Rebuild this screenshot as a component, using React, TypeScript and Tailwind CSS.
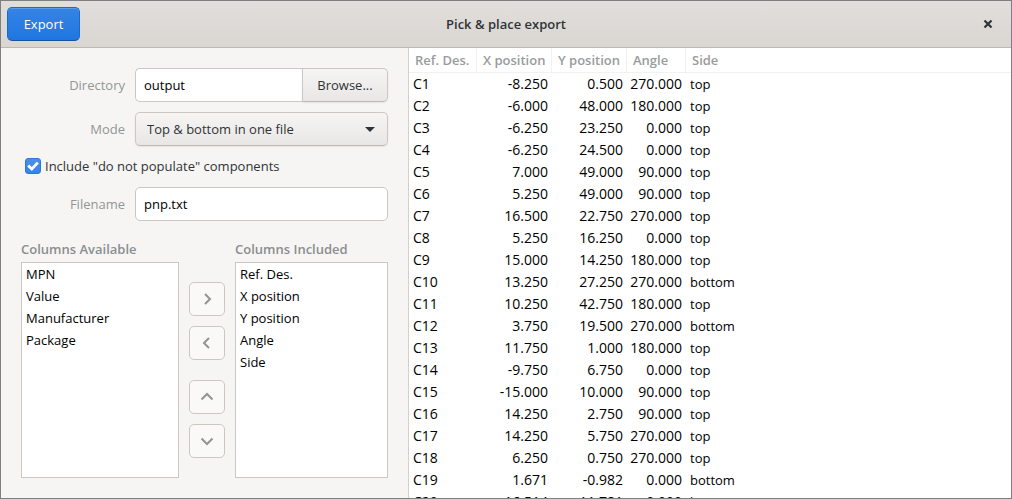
import type { ReactNode } from "react";

type Row = [string, string, string, string, string];

const ROWS: Row[] = [
  ["C1", "-8.250", "0.500", "270.000", "top"],
  ["C2", "-6.000", "48.000", "180.000", "top"],
  ["C3", "-6.250", "23.250", "0.000", "top"],
  ["C4", "-6.250", "24.500", "0.000", "top"],
  ["C5", "7.000", "49.000", "90.000", "top"],
  ["C6", "5.250", "49.000", "90.000", "top"],
  ["C7", "16.500", "22.750", "270.000", "top"],
  ["C8", "5.250", "16.250", "0.000", "top"],
  ["C9", "15.000", "14.250", "180.000", "top"],
  ["C10", "13.250", "27.250", "270.000", "bottom"],
  ["C11", "10.250", "42.750", "180.000", "top"],
  ["C12", "3.750", "19.500", "270.000", "bottom"],
  ["C13", "11.750", "1.000", "180.000", "top"],
  ["C14", "-9.750", "6.750", "0.000", "top"],
  ["C15", "-15.000", "10.000", "90.000", "top"],
  ["C16", "14.250", "2.750", "90.000", "top"],
  ["C17", "14.250", "5.750", "270.000", "top"],
  ["C18", "6.250", "0.750", "270.000", "top"],
  ["C19", "1.671", "-0.982", "0.000", "bottom"],
  ["C20", "16.514", "11.781", "0.000", "bottom"],
];

const AVAILABLE = ["MPN", "Value", "Manufacturer", "Package"];
const INCLUDED = ["Ref. Des.", "X position", "Y position", "Angle", "Side"];

function ColumnList({ title, items }: { title: string; items: string[] }) {
  return (
    <section className="flex min-w-0 flex-col" aria-label={title}>
      <h2 className="h-[21px] font-semibold leading-4 whitespace-nowrap text-[#8b8e8f]">{title}</h2>
      <ul className="grow border border-[#cdc7c2] bg-white text-black">
        {items.map((item) => (
          <li key={item} className="px-1 leading-[22px]">
            {item}
          </li>
        ))}
      </ul>
    </section>
  );
}

function MoveButton({ label, children }: { label: string; children: ReactNode }) {
  return (
    <button
      type="button"
      aria-label={label}
      className="flex h-[34px] w-9 items-center justify-center rounded-[5px] border border-[#cdc7c2] bg-[#faf9f8]"
    >
      <svg width="16" height="16" viewBox="0 0 16 16" fill="none" stroke="#929595" strokeWidth="2" aria-hidden="true">
        {children}
      </svg>
    </button>
  );
}

export default function App() {
  return (
    <div className="flex h-screen flex-col overflow-hidden border border-[#7f7f7f] bg-[#f6f5f4] font-['Open_Sans','Noto_Sans',sans-serif] text-[13px] text-[#2e3436]">
      <header className="grid h-[47px] shrink-0 grid-cols-[1fr_auto_1fr] items-center border-b border-[#bfb8b1] bg-linear-to-b from-[#e1dedb] to-[#dad6d2] px-1.5">
        <button
          type="button"
          className="h-[34px] w-[73px] justify-self-start rounded-[5px] border border-[#1b6acb] border-b-[#15539e] bg-linear-to-b from-[#3584e4] to-[#1f76e1] pt-0.5 text-white shadow-[inset_0_1px_rgba(255,255,255,0.2)]"
        >
          Export
        </button>
        <h1 className="pt-0.5 font-semibold">Pick &amp; place export</h1>
        <button type="button" aria-label="Close" className="flex h-[34px] w-[34px] items-center justify-center justify-self-end">
          <svg width="16" height="16" viewBox="0 0 16 16" stroke="#2e3436" strokeWidth="2.2" aria-hidden="true">
            <path d="M4.500 4.500l7 7M11.500 4.500l-7 7" />
          </svg>
        </button>
      </header>

      <main className="flex min-h-0 grow">
        <form className="flex w-[408px] shrink-0 flex-col border-r border-[#d5d0cc] p-5 pr-5" onSubmit={(e) => e.preventDefault()}>
          <div className="grid grid-cols-[104px_minmax(0,1fr)] items-center gap-2.5">
            <label htmlFor="directory" className="pt-0.5 text-right text-[#929595]">
              Directory
            </label>
            <div className="flex">
              <input
                id="directory"
                defaultValue="output"
                className="h-[34px] min-w-0 grow rounded-l-[5px] border border-r-0 border-[#cdc7c2] bg-white px-2 text-black outline-none"
              />
              <button
                type="button"
                className="h-[34px] w-[86px] shrink-0 rounded-r-[5px] border border-[#cdc7c2] border-b-[#bfb8b1] bg-linear-to-b from-[#f6f5f4] to-[#e8e7e5] pt-0.5 shadow-[0_1px_2px_rgba(0,0,0,0.07)]"
              >
                Browse...
              </button>
            </div>

            <label htmlFor="mode" className="pt-0.5 text-right text-[#929595]">
              Mode
            </label>
            <div className="relative">
              <select
                id="mode"
                className="h-[34px] w-full appearance-none rounded-[5px] border border-[#cdc7c2] border-b-[#bfb8b1] bg-linear-to-b from-[#f6f5f4] to-[#e8e7e5] pt-0.5 pr-8 pl-[11px] shadow-[0_1px_2px_rgba(0,0,0,0.07)]"
              >
                <option>Top &amp; bottom in one file</option>
                <option>Top &amp; bottom separately</option>
              </select>
              <svg className="pointer-events-none absolute top-[9px] right-[10px]" width="16" height="16" viewBox="0 0 16 16" fill="#2e3436" aria-hidden="true">
                <path d="M3 6h10l-5 5z" />
              </svg>
            </div>

            <label className="col-span-2 mb-px flex h-5 items-center gap-1 pl-1">
              <input type="checkbox" defaultChecked className="peer sr-only" />
              <svg
                className="shrink-0 rounded-[3px] border border-[#2b78da] bg-linear-to-b from-[#4a90e8] to-[#3584e4]"
                width="16"
                height="16"
                viewBox="1 1 14 14"
                fill="none"
                stroke="#fff"
                strokeWidth="2.8"
                aria-hidden="true"
              >
                <path d="M3.200 7.400l3.600 3.600 6-6.400" />
              </svg>
              <span className="pt-0.5">Include "do not populate" components</span>
            </label>

            <label htmlFor="filename" className="pt-0.5 text-right text-[#929595]">
              Filename
            </label>
            <input
              id="filename"
              defaultValue="pnp.txt"
              className="h-[34px] min-w-0 rounded-[5px] border border-[#cdc7c2] bg-white px-2 text-black outline-none"
            />
          </div>

          <div className="mt-5 grid grow grid-cols-[158px_36px_minmax(0,1fr)] gap-2.5">
            <ColumnList title="Columns Available" items={AVAILABLE} />
            <div className="flex flex-col justify-center gap-5 pt-[21px]">
              <div className="flex flex-col gap-2.5">
                <MoveButton label="Include column">
                  <path d="M6 3l5 5-5 5" />
                </MoveButton>
                <MoveButton label="Remove column">
                  <path d="M10 3L5 8l5 5" />
                </MoveButton>
              </div>
              <div className="flex flex-col gap-2.5">
                <MoveButton label="Move column up">
                  <path d="M2.500 10.500L8 5l5.500 5.500" />
                </MoveButton>
                <MoveButton label="Move column down">
                  <path d="M2.500 5.500L8 11l5.500-5.500" />
                </MoveButton>
              </div>
            </div>
            <ColumnList title="Columns Included" items={INCLUDED} />
          </div>
        </form>

        <div className="min-w-0 grow overflow-hidden bg-white">
          <table className="w-full table-fixed border-separate border-spacing-0 text-black">
            <colgroup>
              <col className="w-[68px]" />
              <col className="w-[75px]" />
              <col className="w-[75px]" />
              <col className="w-[59px]" />
              <col />
            </colgroup>
            <thead>
              <tr className="h-[25px] text-left whitespace-nowrap text-[#999c9c]">
                {["Ref. Des.", "X position", "Y position", "Angle", "Side"].map((h) => (
                  <th key={h} scope="col" className="border-r border-b border-[#f1f1f1] p-0 pt-0.5 pl-1.5 font-semibold last:border-r-0">
                    {h}
                  </th>
                ))}
              </tr>
            </thead>
            <tbody>
              {ROWS.map(([ref, x, y, angle, side]) => (
                <tr key={ref} className="h-[22px] leading-[22px]">
                  <td className="p-0 pl-1 text-sm/[22px]">{ref}</td>
                  <td className="p-0 pr-1 text-right text-sm/[22px]">{x}</td>
                  <td className="p-0 pr-1 text-right text-sm/[22px]">{y}</td>
                  <td className="p-0 pr-1 text-right text-sm/[22px]">{angle}</td>
                  <td className="p-0 pl-1">{side}</td>
                </tr>
              ))}
            </tbody>
          </table>
        </div>
      </main>
    </div>
  );
}
